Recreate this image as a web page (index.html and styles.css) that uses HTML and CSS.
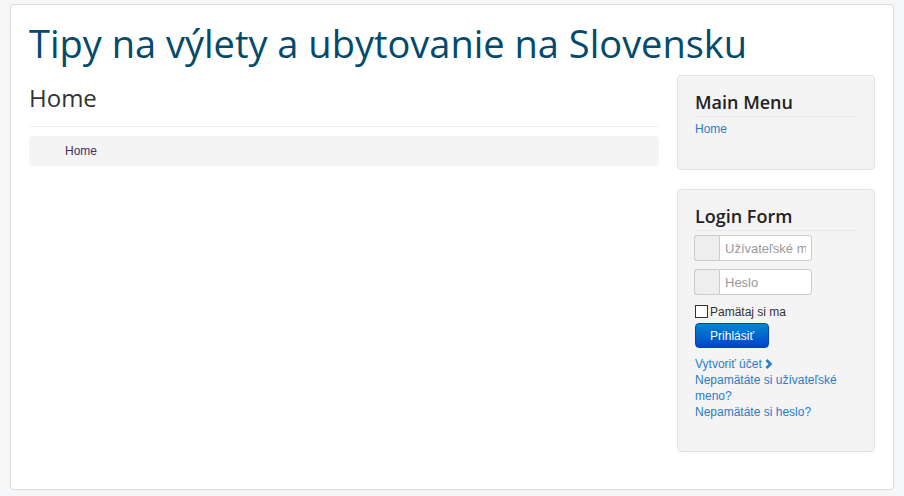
FILE: index.html
```html
<!DOCTYPE html>
<html lang="sk">
  <head>
    <meta charset="UTF-8" />
    <meta name="viewport" content="width=device-width, initial-scale=1.0" />
    <title>Tipy na výlety a ubytovanie na Slovensku</title>
    <link rel="stylesheet" href="styles.css">
  </head>
  <body>
    <div class="body-wrap">
      <h1 class="site-title">Tipy na výlety a ubytovanie na Slovensku</h1>
      <div class="row">
        <main class="content">
          <h2 class="page-header">Home</h2>
          <ul class="breadcrumb">
            <li>Home</li>
          </ul>
        </main>
        <aside class="sidebar">
          <div class="well">
            <h3 class="module-title">Main Menu</h3>
            <ul class="menu">
              <li><a href="#">Home</a></li>
            </ul>
          </div>
          <div class="well login">
            <h3 class="module-title">Login Form</h3>
            <form>
              <div class="input-prepend">
                <span class="add-on"></span>
                <input type="text" placeholder="Užívateľské meno" />
              </div>
              <div class="input-prepend">
                <span class="add-on"></span>
                <input type="password" placeholder="Heslo" />
              </div>
              <label class="remember"><input type="checkbox" /> Pamätaj si ma</label>
              <button type="button" class="btn-primary">Prihlásiť</button>
              <ul class="login-links">
                <li><a href="#">Vytvoriť účet <svg class="chev" width="8" height="10" viewBox="0 0 8 10"><path d="M1.5 1 L5.5 5 L1.5 9" fill="none" stroke="#2a7cca" stroke-width="2.6"/></svg></a></li>
                <li><a href="#">Nepamätáte si užívateľské meno?</a></li>
                <li><a href="#">Nepamätáte si heslo?</a></li>
              </ul>
            </form>
          </div>
        </aside>
      </div>
    </div>
  </body>
</html>
```

FILE: styles.css
```css
/* page */
body {
  margin: 0;
  padding: 4px 11px 0 10px;
  background-color: #f4f6f7;
  font-family: "Liberation Sans", Arial, sans-serif;
  font-size: 12px;
  color: #333;
}
.body-wrap {
  box-sizing: border-box;
  width: 884px;
  height: 486px;
  padding: 16px 17px 0 18px;
  background-color: #fff;
  border: 1px solid #dcdcdc;
  border-radius: 4px;
}
.site-title {
  margin: 0;
  font-family: "Open Sans", sans-serif;
  font-weight: normal;
  font-size: 38px;
  line-height: 44px;
  color: #034a6d;
}
.row {
  display: flex;
  gap: 18px;
  margin-top: 10px;
}
/* main column */
.content {
  width: 630px;
}
.page-header {
  margin: 8px 0 0;
  padding-bottom: 13px;
  border-bottom: 1px solid #eee;
  font-family: "Open Sans", sans-serif;
  font-weight: normal;
  font-size: 24px;
  line-height: 30px;
  color: #333;
}
.breadcrumb {
  list-style: none;
  margin: 9px 0 0;
  padding: 0 0 0 36px;
  height: 30px;
  line-height: 30px;
  background-color: #f4f4f4;
  border-radius: 4px;
  color: #44305a;
}
/* sidebar */
.sidebar {
  width: 198px;
}
.well {
  box-sizing: border-box;
  height: 95px;
  padding: 15px 17px 0 17px;
  background-color: #f4f4f5;
  border: 1px solid #e3e3e3;
  border-radius: 4px;
  margin-bottom: 19px;
}
.well.login {
  height: 263px;
}
.module-title {
  margin: 0;
  padding-bottom: 3px;
  border-bottom: 1px solid #e8e8e8;
  font-family: "Open Sans", sans-serif;
  font-weight: 600;
  font-size: 18px;
  line-height: 22px;
  color: #222;
}
.menu,
.login-links {
  list-style: none;
  margin: 4px 0 0;
  padding: 0;
  line-height: 16px;
}
a {
  color: #2a7cca;
  text-decoration: none;
}
.input-prepend {
  display: flex;
  width: 118px;
  height: 26px;
  margin: 4px 0 0 -1px;
}
.input-prepend + .input-prepend {
  margin-top: 8px;
}
.add-on {
  box-sizing: border-box;
  width: 25px;
  background-color: #eee;
  border: 1px solid #ccc;
  border-right: 0;
  border-radius: 3px 0 0 3px;
}
.input-prepend input {
  box-sizing: border-box;
  width: 93px;
  margin: 0;
  padding: 0 5px;
  border: 1px solid #ccc;
  border-radius: 0 3px 3px 0;
  font-family: "Liberation Sans", Arial, sans-serif;
  font-size: 13px;
  color: #555;
  background: #fff;
}
.input-prepend input::placeholder {
  color: #999;
}
.remember {
  display: flex;
  align-items: center;
  gap: 2px;
  margin-top: 10px;
  height: 13px;
  color: #333;
}
.remember input {
  appearance: none;
  box-sizing: border-box;
  width: 13px;
  height: 13px;
  margin: 0;
  border: 1px solid #333;
  background: #fff;
}
.btn-primary {
  display: block;
  margin-top: 5px;
  width: 74px;
  height: 25px;
  padding: 0;
  border: 1px solid #0044cc;
  border-radius: 4px;
  background: linear-gradient(#0088cc, #0044cc);
  color: #fff;
  font-family: "Liberation Sans", Arial, sans-serif;
  font-size: 12px;
}
.login-links {
  margin-top: 8px;
}
.chev {
  vertical-align: -1px;
}
```
